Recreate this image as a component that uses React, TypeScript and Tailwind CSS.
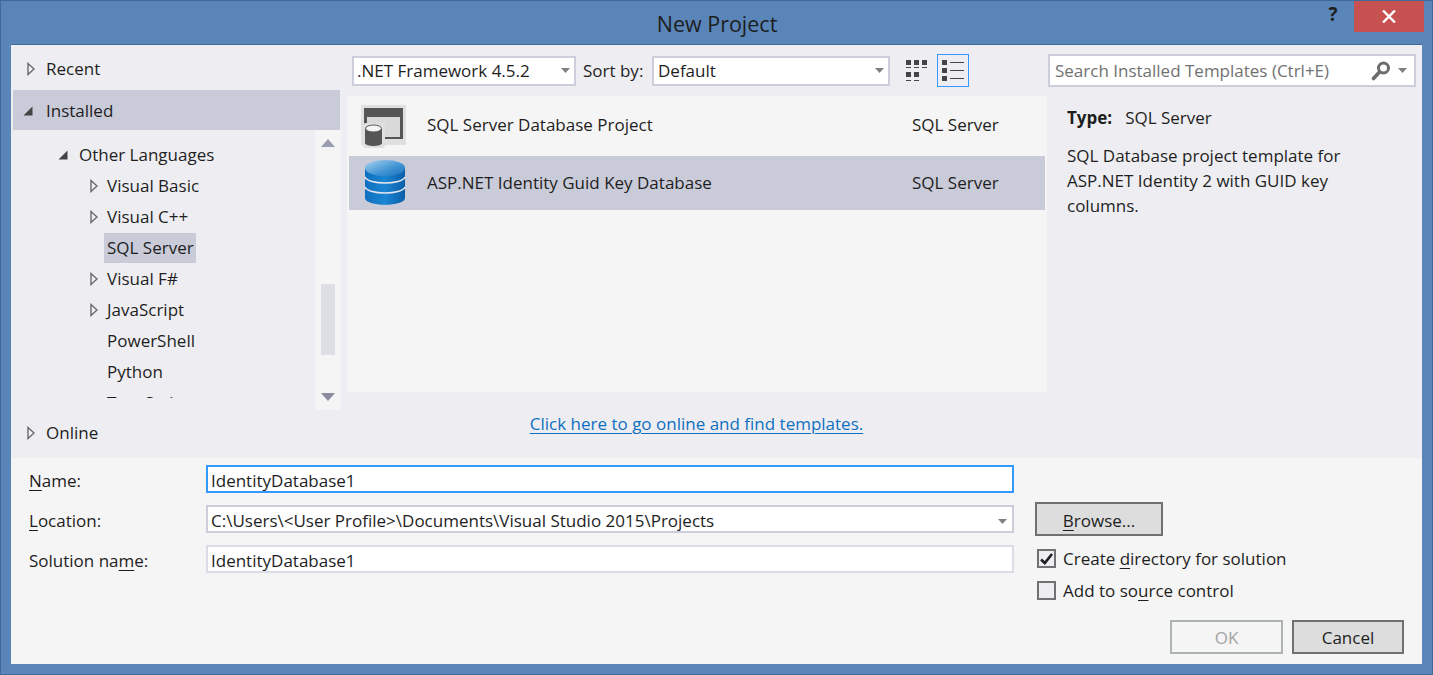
import type { ReactNode } from 'react';

const ink = 'text-[#1e1e1e]';

function Closed() {
  return (
    <svg width="8" height="14" viewBox="0 0 8 14" aria-hidden="true">
      <path d="M1 1.5 L1 12.5 L7 7 Z" fill="#f2f2f5" stroke="#6a6a6a" strokeWidth="1.4" />
    </svg>
  );
}

function Open() {
  return (
    <svg width="10" height="10" viewBox="0 0 10 10" aria-hidden="true">
      <path d="M9.5 0.5 L9.5 9.5 L0.5 9.5 Z" fill="#444444" />
    </svg>
  );
}

function TreeRow({ label, pad, arrow, box, selected }: {
  label: string;
  pad: string;
  arrow?: 'open' | 'closed';
  box: string;
  selected?: boolean;
}) {
  return (
    <div className={`flex h-[31px] shrink-0 items-center ${pad}`}>
      <div className={`flex items-center ${box}`}>
        {arrow === 'open' && <Open />}
        {arrow === 'closed' && <Closed />}
      </div>
      <span className={selected ? '-ml-[3px] flex h-[30px] items-center bg-[#cacbd9] px-[3px] pr-[2px]' : ''}>{label}</span>
    </div>
  );
}

function Caret({ color = '#808080' }: { color?: string }) {
  return (
    <svg width="9" height="5" viewBox="0 0 9 5" aria-hidden="true">
      <path d="M0 0 H9 L4.5 5 Z" fill={color} />
    </svg>
  );
}

function ProjectIcon() {
  return (
    <svg width="46" height="44" viewBox="0 0 46 44" aria-hidden="true">
      <rect x="0" y="1" width="45" height="40" fill="#e0e0e0" />
      <rect x="3" y="4" width="39" height="31" fill="#555555" />
      <rect x="6" y="13" width="33" height="20" fill="#d9d9d9" />
      <rect x="2" y="19" width="22" height="25" rx="3" fill="#e0e0e0" />
      <path d="M4 24 V39 C4 43 21 43 21 39 V24 Z" fill="#555555" />
      <ellipse cx="12.5" cy="24.5" rx="8" ry="3.5" fill="#f4f4f4" stroke="#555555" />
    </svg>
  );
}

function DatabaseIcon() {
  return (
    <svg width="42" height="46" viewBox="0 0 42 46" aria-hidden="true">
      <defs>
        <linearGradient id="dbTop" x1="0" y1="0" x2="1" y2="1">
          <stop offset="0" stopColor="#a8d2ef" />
          <stop offset="0.6" stopColor="#3f93d4" />
          <stop offset="1" stopColor="#1d74bd" />
        </linearGradient>
        <linearGradient id="dbSide" x1="0" y1="0" x2="1" y2="0">
          <stop offset="0" stopColor="#0f6fbe" />
          <stop offset="0.5" stopColor="#1a85d2" />
          <stop offset="1" stopColor="#0b5ea8" />
        </linearGradient>
      </defs>
      <path d="M1 8 V38 C1 47 41 47 41 38 V8 Z" fill="url(#dbSide)" />
      <ellipse cx="21" cy="8" rx="20" ry="8" fill="url(#dbTop)" />
      <path d="M1 17 C4 25 38 25 41 17" fill="none" stroke="#e3e6ee" strokeWidth="1.6" />
      <path d="M1 27 C4 35 38 35 41 27" fill="none" stroke="#e3e6ee" strokeWidth="1.6" />
    </svg>
  );
}

function GridIcon() {
  return (
    <svg width="22" height="22" viewBox="0 0 22 22" fill="#444444" aria-hidden="true">
      <rect x="0" y="0" width="5" height="5" />
      <rect x="8" y="0" width="5" height="5" />
      <rect x="16" y="0" width="5" height="5" />
      <rect x="0" y="7" width="5" height="1" />
      <rect x="8" y="7" width="5" height="1" />
      <rect x="16" y="7" width="5" height="1" />
      <rect x="0" y="12" width="5" height="5" />
      <rect x="8" y="12" width="5" height="5" />
      <rect x="0" y="20" width="5" height="1" />
      <rect x="8" y="20" width="5" height="1" />
    </svg>
  );
}

function ListIcon() {
  return (
    <svg width="22" height="22" viewBox="0 0 22 22" fill="#444444" aria-hidden="true">
      <rect x="0" y="0" width="5" height="5" />
      <rect x="8" y="2" width="14" height="1" />
      <rect x="0" y="8" width="5" height="5" />
      <rect x="8" y="10" width="14" height="1" />
      <rect x="0" y="16" width="5" height="5" />
      <rect x="8" y="18" width="14" height="1" />
    </svg>
  );
}

function SearchIcon() {
  return (
    <svg width="20" height="20" viewBox="0 0 20 20" aria-hidden="true">
      <circle cx="12.5" cy="7" r="5" fill="none" stroke="#6d6d6d" strokeWidth="3" />
      <path d="M8.5 11 L2.5 17.5" stroke="#6d6d6d" strokeWidth="3.6" strokeLinecap="round" />
    </svg>
  );
}

function Key({ children }: { children: ReactNode }) {
  return <span className="underline decoration-1 underline-offset-[3px]">{children}</span>;
}

function TextBox({ value, focused, caret }: { value: string; focused?: boolean; caret?: boolean }) {
  return (
    <div className={`flex h-[28px] w-[808px] items-center justify-between border-2 bg-white pt-[4px] pr-[5px] pl-[3px] ${focused ? 'border-[#3399ff]' : caret ? 'border-[#cccedb]' : 'border-[#dbdce6]'}`}>
      <span>{value}</span>
      {caret && <Caret />}
    </div>
  );
}

function FormRow({ label, children }: { label: ReactNode; children: ReactNode }) {
  return (
    <div className="flex items-center">
      <div className="w-[177px] pt-[4px]">{label}</div>
      {children}
    </div>
  );
}

function Check({ checked, children }: { checked?: boolean; children: ReactNode }) {
  return (
    <div className="ml-[2px] flex h-[20px] items-center gap-[7px]">
      <div className="-mt-[1px] flex h-[19px] w-[19px] items-center justify-center border-2 border-[#717171] bg-[#eeeef2]">
        {checked && (
          <svg width="13" height="12" viewBox="0 0 13 12" aria-hidden="true">
            <path d="M1 6.5 L4.8 10 L12 1" fill="none" stroke="#1e1e1e" strokeWidth="2.6" />
          </svg>
        )}
      </div>
      <span>{children}</span>
    </div>
  );
}

export default function App() {
  return (
    <div className={`flex h-[675px] w-[1433px] flex-col overflow-hidden border border-[#41699a] bg-[#5985b9] font-['Open_Sans',sans-serif] text-[17px] leading-[24px] ${ink}`}>
      <div className="flex h-[43px] shrink-0 items-start">
        <div className="ml-[296px] flex h-[43px] w-[840px] items-center justify-center pt-[3px] text-[21.5px]">New Project</div>
        <div className="ml-[188px] w-[16px] pt-[1px] text-center text-[19px] font-bold">?</div>
        <div className="ml-[13px] flex h-[31px] w-[70px] items-center justify-center bg-[#c75050]">
          <svg width="14" height="13" viewBox="0 0 14 13" aria-hidden="true">
            <path d="M1 0.5 L13 12.5 M13 0.5 L1 12.5" stroke="#ffffff" strokeWidth="2.4" />
          </svg>
        </div>
      </div>

      <div className="mr-[10px] ml-[10px] flex h-[620px] flex-col border-t border-[#41699a]">
        <div className="flex h-[413px] shrink-0 bg-[#eeeef2]">
          <div className="flex w-[330px] shrink-0 flex-col pt-[9px]">
            <div className="flex h-[30px] shrink-0 items-center">
              <TreeRow label="Recent" pad="pl-[11px]" box="w-[24px] pl-[5px]" arrow="closed" />
            </div>
            <div className="mt-[6px] ml-[2px] flex h-[40px] w-[327px] shrink-0 items-center bg-[#cacbd9] pt-[2px]">
              <TreeRow label="Installed" pad="pl-[9px]" box="w-[24px] pl-[1px]" arrow="open" />
            </div>
            <div className="flex h-[280px] shrink-0">
              <div className="flex h-[268px] w-[304px] flex-col overflow-hidden pt-[9px]">
                <TreeRow label="Other Languages" pad="pl-[44px]" box="w-[24px] pl-[3px]" arrow="open" />
                <TreeRow label="Visual Basic" pad="pl-[75px]" box="w-[21px] pl-[4px]" arrow="closed" />
                <TreeRow label="Visual C++" pad="pl-[75px]" box="w-[21px] pl-[4px]" arrow="closed" />
                <TreeRow label="SQL Server" pad="pl-[75px]" box="w-[21px]" selected />
                <TreeRow label="Visual F#" pad="pl-[75px]" box="w-[21px] pl-[4px]" arrow="closed" />
                <TreeRow label="JavaScript" pad="pl-[75px]" box="w-[21px] pl-[4px]" arrow="closed" />
                <TreeRow label="PowerShell" pad="pl-[75px]" box="w-[21px]" />
                <TreeRow label="Python" pad="pl-[75px]" box="w-[21px]" />
                <TreeRow label="TypeScript" pad="pl-[75px]" box="w-[21px]" />
              </div>
              <div className="flex w-[26px] flex-col items-center bg-[#f5f5f5]">
                <svg className="mt-[9px]" width="14" height="8" viewBox="0 0 14 8" aria-hidden="true">
                  <path d="M7 0 L14 8 H0 Z" fill="#9a9db2" />
                </svg>
                <div className="mt-[137px] h-[71px] w-[14px] bg-[#dedee6]" />
                <svg className="mt-[38px]" width="14" height="8" viewBox="0 0 14 8" aria-hidden="true">
                  <path d="M0 0 H14 L7 8 Z" fill="#8b8d9f" />
                </svg>
              </div>
            </div>
            <div className="flex h-[44px] shrink-0 items-center pt-[2px]">
              <TreeRow label="Online" pad="pl-[11px]" box="w-[24px] pl-[5px]" arrow="closed" />
            </div>
          </div>

          <div className="flex w-[706px] shrink-0 flex-col pt-[9px]">
            <div className="flex h-[33px] shrink-0 items-center pl-[11px]">
              <div className="flex h-[30px] w-[224px] items-center justify-between border-2 border-[#cccedb] bg-white pr-[4px] pl-[3px]">
                <span>.NET Framework 4.5.2</span>
                <Caret />
              </div>
              <span className="ml-[7px] w-[69px]">Sort by:</span>
              <div className="flex h-[30px] w-[238px] items-center justify-between border-2 border-[#cccedb] bg-white pr-[4px] pl-[4px]">
                <span>Default</span>
                <Caret />
              </div>
              <div className="ml-[15px] flex h-[33px] w-[23px] items-center justify-center">
                <GridIcon />
              </div>
              <div className="ml-[9px] flex h-[33px] w-[32px] items-center justify-center border-[1.5px] border-[#3399ff]">
                <ListIcon />
              </div>
            </div>
            <div className="mt-[9px] ml-[6px] flex h-[296px] w-[700px] shrink-0 flex-col bg-[#f5f5f5]">
              <div className="flex h-[60px] items-center">
                <div className="ml-[14px] flex h-[60px] w-[66px] shrink-0 items-center"><ProjectIcon /></div>
                <span className="w-[485px] pb-[2px]">SQL Server Database Project</span>
                <span className="pb-[2px]">SQL Server</span>
              </div>
              <div className="mx-[2px] flex h-[54px] items-center bg-[#cacbd9]">
                <div className="ml-[15px] flex w-[63px] shrink-0 items-center"><DatabaseIcon /></div>
                <span className="w-[485px]">ASP.NET Identity Guid Key Database</span>
                <span>SQL Server</span>
              </div>
            </div>
            <div className="flex justify-center pt-[20px] pl-[5px]">
              <span className="text-[#0e70c0] underline underline-offset-[3px]">Click here to go online and find templates.</span>
            </div>
          </div>

          <div className="flex-1 pt-[9px] pl-[1px]">
            <div className="flex h-[33px] w-[368px] items-center justify-between border-2 border-[#cccedb] bg-white pr-[7px] pl-[5px]">
              <span className="text-[#717171]">Search Installed Templates (Ctrl+E)</span>
              <div className="flex items-center gap-[7px]">
                <SearchIcon />
                <Caret />
              </div>
            </div>
            <div className="pt-[18px] pl-[19px] leading-[25px]">
              <div className="flex gap-[13px]">
                <span className="font-bold">Type:</span>
                <span>SQL Server</span>
              </div>
              <p className="mt-[13px] w-[310px]">SQL Database project template for ASP.NET Identity 2 with GUID key columns.</p>
            </div>
          </div>
        </div>

        <div className="flex flex-1 bg-[#f5f5f5]">
          <div className="flex w-[1024px] shrink-0 flex-col gap-[12px] pt-[7px] pl-[18px]">
            <FormRow label={<><Key>N</Key>ame:</>}>
              <TextBox value="IdentityDatabase1" focused />
            </FormRow>
            <FormRow label={<><Key>L</Key>ocation:</>}>
              <TextBox value="C:\Users\<User Profile>\Documents\Visual Studio 2015\Projects" caret />
            </FormRow>
            <FormRow label={<>Solution na<Key>m</Key>e:</>}>
              <TextBox value="IdentityDatabase1" />
            </FormRow>
          </div>
          <div className="flex-1 pt-[44px]">
            <div className="flex h-[34px] w-[128px] items-center justify-center border-2 border-[#707070] bg-[#dddddd] pt-[4px]">
              <span><Key>B</Key>rowse...</span>
            </div>
            <div className="mt-[13px] flex flex-col gap-[12px]">
              <Check checked>Create <Key>d</Key>irectory for solution</Check>
              <Check>Add to so<Key>u</Key>rce control</Check>
            </div>
            <div className="mt-[19px] flex gap-[9px] pl-[135px]">
              <div className="flex h-[34px] w-[113px] items-center justify-center border-2 border-[#adb2b5] pt-[2px] text-[#a2a4a5]">OK</div>
              <div className="flex h-[34px] w-[112px] items-center justify-center border-2 border-[#707070] bg-[#dddddd] pt-[2px]">Cancel</div>
            </div>
          </div>
        </div>
      </div>
    </div>
  );
}
